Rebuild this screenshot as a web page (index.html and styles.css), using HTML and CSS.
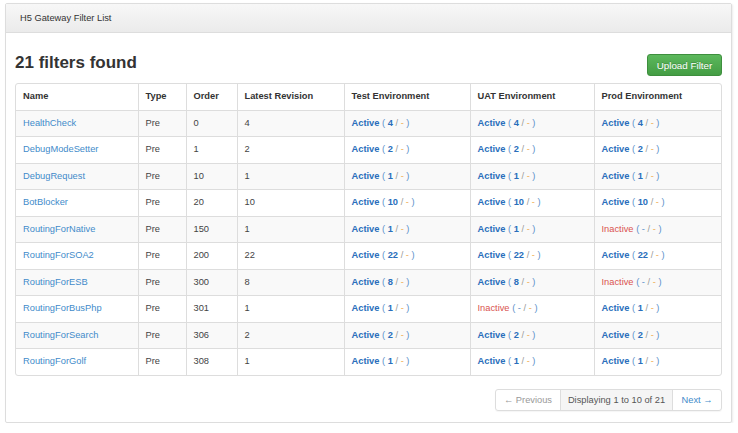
FILE: index.html
```html
<!DOCTYPE html>
<html>
<head>
<meta charset="utf-8">
<link rel="stylesheet" href="styles.css">
</head>
<body>
<div class="panel">
  <div class="panel-heading">H5 Gateway Filter List</div>
  <div class="panel-body">
    <div class="title-row">
      <h3 class="title">21 filters found</h3>
      <button class="btn-upload">Upload Filter</button>
    </div>
    <div class="table-wrap">
      <table class="filters">
        <colgroup>
          <col class="c-name"><col class="c-type"><col class="c-order"><col class="c-rev"><col class="c-test"><col class="c-uat"><col class="c-prod">
        </colgroup>
        <thead>
          <tr><th>Name</th><th>Type</th><th>Order</th><th>Latest Revision</th><th>Test Environment</th><th>UAT Environment</th><th>Prod Environment</th></tr>
        </thead>
        <tbody>
          <tr><td><a>HealthCheck</a></td><td class="plain">Pre</td><td class="plain">0</td><td class="plain">4</td>
            <td><b class="act">Active</b> <span class="p">(</span> <b class="n">4</b> <span class="s">/</span> <span class="d">-</span> <span class="p">)</span></td>
            <td><b class="act">Active</b> <span class="p">(</span> <b class="n">4</b> <span class="s">/</span> <span class="d">-</span> <span class="p">)</span></td>
            <td><b class="act">Active</b> <span class="p">(</span> <b class="n">4</b> <span class="s">/</span> <span class="d">-</span> <span class="p">)</span></td></tr>
          <tr><td><a>DebugModeSetter</a></td><td class="plain">Pre</td><td class="plain">1</td><td class="plain">2</td>
            <td><b class="act">Active</b> <span class="p">(</span> <b class="n">2</b> <span class="s">/</span> <span class="d">-</span> <span class="p">)</span></td>
            <td><b class="act">Active</b> <span class="p">(</span> <b class="n">2</b> <span class="s">/</span> <span class="d">-</span> <span class="p">)</span></td>
            <td><b class="act">Active</b> <span class="p">(</span> <b class="n">2</b> <span class="s">/</span> <span class="d">-</span> <span class="p">)</span></td></tr>
          <tr><td><a>DebugRequest</a></td><td class="plain">Pre</td><td class="plain">10</td><td class="plain">1</td>
            <td><b class="act">Active</b> <span class="p">(</span> <b class="n">1</b> <span class="s">/</span> <span class="d">-</span> <span class="p">)</span></td>
            <td><b class="act">Active</b> <span class="p">(</span> <b class="n">1</b> <span class="s">/</span> <span class="d">-</span> <span class="p">)</span></td>
            <td><b class="act">Active</b> <span class="p">(</span> <b class="n">1</b> <span class="s">/</span> <span class="d">-</span> <span class="p">)</span></td></tr>
          <tr><td><a>BotBlocker</a></td><td class="plain">Pre</td><td class="plain">20</td><td class="plain">10</td>
            <td><b class="act">Active</b> <span class="p">(</span> <b class="n">10</b> <span class="s">/</span> <span class="d">-</span> <span class="p">)</span></td>
            <td><b class="act">Active</b> <span class="p">(</span> <b class="n">10</b> <span class="s">/</span> <span class="d">-</span> <span class="p">)</span></td>
            <td><b class="act">Active</b> <span class="p">(</span> <b class="n">10</b> <span class="s">/</span> <span class="d">-</span> <span class="p">)</span></td></tr>
          <tr><td><a>RoutingForNative</a></td><td class="plain">Pre</td><td class="plain">150</td><td class="plain">1</td>
            <td><b class="act">Active</b> <span class="p">(</span> <b class="n">1</b> <span class="s">/</span> <span class="d">-</span> <span class="p">)</span></td>
            <td><b class="act">Active</b> <span class="p">(</span> <b class="n">1</b> <span class="s">/</span> <span class="d">-</span> <span class="p">)</span></td>
            <td><span class="inact">Inactive</span> <span class="p">(</span> <span class="p">-</span> <span class="s">/</span> <span class="d">-</span> <span class="p">)</span></td></tr>
          <tr><td><a>RoutingForSOA2</a></td><td class="plain">Pre</td><td class="plain">200</td><td class="plain">22</td>
            <td><b class="act">Active</b> <span class="p">(</span> <b class="n">22</b> <span class="s">/</span> <span class="d">-</span> <span class="p">)</span></td>
            <td><b class="act">Active</b> <span class="p">(</span> <b class="n">22</b> <span class="s">/</span> <span class="d">-</span> <span class="p">)</span></td>
            <td><b class="act">Active</b> <span class="p">(</span> <b class="n">22</b> <span class="s">/</span> <span class="d">-</span> <span class="p">)</span></td></tr>
          <tr><td><a>RoutingForESB</a></td><td class="plain">Pre</td><td class="plain">300</td><td class="plain">8</td>
            <td><b class="act">Active</b> <span class="p">(</span> <b class="n">8</b> <span class="s">/</span> <span class="d">-</span> <span class="p">)</span></td>
            <td><b class="act">Active</b> <span class="p">(</span> <b class="n">8</b> <span class="s">/</span> <span class="d">-</span> <span class="p">)</span></td>
            <td><span class="inact">Inactive</span> <span class="p">(</span> <span class="p">-</span> <span class="s">/</span> <span class="d">-</span> <span class="p">)</span></td></tr>
          <tr><td><a>RoutingForBusPhp</a></td><td class="plain">Pre</td><td class="plain">301</td><td class="plain">1</td>
            <td><b class="act">Active</b> <span class="p">(</span> <b class="n">1</b> <span class="s">/</span> <span class="d">-</span> <span class="p">)</span></td>
            <td><span class="inact">Inactive</span> <span class="p">(</span> <span class="p">-</span> <span class="s">/</span> <span class="d">-</span> <span class="p">)</span></td>
            <td><b class="act">Active</b> <span class="p">(</span> <b class="n">1</b> <span class="s">/</span> <span class="d">-</span> <span class="p">)</span></td></tr>
          <tr><td><a>RoutingForSearch</a></td><td class="plain">Pre</td><td class="plain">306</td><td class="plain">2</td>
            <td><b class="act">Active</b> <span class="p">(</span> <b class="n">2</b> <span class="s">/</span> <span class="d">-</span> <span class="p">)</span></td>
            <td><b class="act">Active</b> <span class="p">(</span> <b class="n">2</b> <span class="s">/</span> <span class="d">-</span> <span class="p">)</span></td>
            <td><b class="act">Active</b> <span class="p">(</span> <b class="n">2</b> <span class="s">/</span> <span class="d">-</span> <span class="p">)</span></td></tr>
          <tr><td><a>RoutingForGolf</a></td><td class="plain">Pre</td><td class="plain">308</td><td class="plain">1</td>
            <td><b class="act">Active</b> <span class="p">(</span> <b class="n">1</b> <span class="s">/</span> <span class="d">-</span> <span class="p">)</span></td>
            <td><b class="act">Active</b> <span class="p">(</span> <b class="n">1</b> <span class="s">/</span> <span class="d">-</span> <span class="p">)</span></td>
            <td><b class="act">Active</b> <span class="p">(</span> <b class="n">1</b> <span class="s">/</span> <span class="d">-</span> <span class="p">)</span></td></tr>
        </tbody>
      </table>
    </div>
    <div class="pager-row">
      <div class="pager">
        <span class="pg prev">&larr; Previous</span>
        <span class="pg info">Displaying 1 to 10 of 21</span>
        <span class="pg next">Next &rarr;</span>
      </div>
    </div>
  </div>
</div>
</body>
</html>
```
FILE: styles.css
```css
html, body {
  margin: 0;
  padding: 0;
  background: #fff;
}
body {
  font-family: "Liberation Sans", Arial, sans-serif;
  font-size: 9.3px;
  color: #3a3a3a;
  padding: 3px 6px 0 5px;
}
.panel {
  border: 1px solid #ddd;
  border-radius: 2px;
  box-shadow: 1px 1px 2px rgba(0,0,0,0.08);
  height: 420px;
  box-sizing: border-box;
}
.panel-heading {
  height: 29px;
  box-sizing: border-box;
  padding: 9px 14px 0;
  background: linear-gradient(#f7f7f7, #ebebeb);
  border-bottom: 1px solid #ddd;
  font-size: 9.3px;
  color: #333;
}
.panel-body {
  padding: 0 9px 0 9px;
}
.title-row {
  display: flex;
  justify-content: space-between;
  align-items: flex-end;
  height: 50px;
  padding-bottom: 7px;
  box-sizing: border-box;
}
.title {
  margin: 0;
  font-size: 17px;
  font-weight: bold;
  line-height: 20px;
  color: #333;
  padding-bottom: 3px;
}
.btn-upload {
  font-family: "Liberation Sans", Arial, sans-serif;
  font-size: 9.8px;
  color: #fff;
  background: linear-gradient(#5cb85c, #449d44);
  border: 1px solid #3e8f3e;
  border-radius: 3px;
  width: 75px;
  height: 22px;
  padding: 0;
  margin-bottom: 0;
  text-shadow: 0 -1px 0 rgba(0,0,0,0.2);
}
.table-wrap {
  border: 1px solid #ddd;
  border-radius: 3px;
  overflow: hidden;
}
.filters {
  width: 100%;
  border-collapse: collapse;
  table-layout: fixed;
}
.c-name { width: 122px; }
.c-type { width: 48px; }
.c-order { width: 51px; }
.c-rev { width: 107px; }
.c-test { width: 126px; }
.c-uat { width: 124px; }
.c-prod { width: auto; }
.filters th, .filters td {
  text-align: left;
  padding: 6px 7px;
  line-height: 13.5px;
  border-left: 1px solid #ddd;
  border-top: 1px solid #ddd;
  white-space: nowrap;
}
.filters th:first-child, .filters td:first-child { border-left: 0; }
.filters thead th {
  border-top: 0;
  font-weight: bold;
  color: #333;
  height: 12.5px;
  border-bottom: 1px solid #ddd;
}
.filters td.plain { color: #444; font-weight: normal; }
.filters tbody tr:nth-child(odd) td { background: #f9f9f9; }
.filters a { color: #428bca; }
.act { color: #2a6ebb; font-weight: bold; }
.n { color: #2a6ebb; font-weight: bold; }
.p { color: #5b8fc9; }
.s { color: #999; }
.d { color: #f0ad4e; }
.inact { color: #d9534f; }
.pager-row {
  display: flex;
  justify-content: flex-end;
  margin-top: 13px;
}
.pager {
  display: flex;
  border: 1px solid #ddd;
  border-radius: 3px;
  height: 22px;
  box-sizing: border-box;
  box-shadow: 0 1px 1px rgba(0,0,0,0.04);
}
.pg {
  display: flex;
  align-items: center;
  justify-content: center;
  white-space: nowrap;
  font-size: 9.3px;
}
.pg + .pg { border-left: 1px solid #ddd; }
.prev { color: #999; width: 64px; }
.info { color: #555; background: #f5f5f5; width: 111px; }
.next { color: #428bca; width: 48px; }
```
